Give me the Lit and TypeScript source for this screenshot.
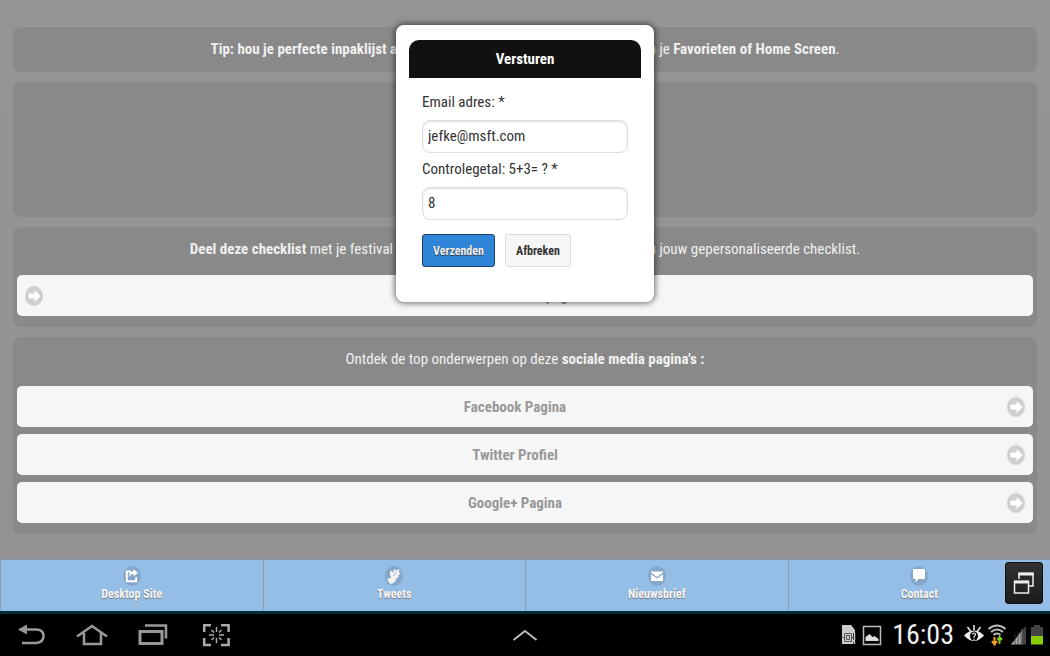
import { LitElement, html, css, svg } from "lit";
import { customElement, state } from "lit/decorators.js";

const arrowIcon = html`<svg class="arrow" viewBox="0 0 18 20" preserveAspectRatio="none" aria-hidden="true">
  <ellipse cx="9" cy="10" rx="9" ry="10" fill="#cfcfcf" />
  <path d="M3.5 7.500h6V4l6 6-6 6.200v-3.700h-6z" fill="#fff" />
</svg>`;

const tabGlyphs = {
  site: svg`<path d="M8 5.5H3.8v9.8h9.4v-4" fill="none" stroke="#fff" stroke-width="2"/><path d="M6 11c0-4 1.8-5.8 4.6-5.8V3l4.2 3.8-4.2 3.6V8C8.600 8 7 9 6 11z" fill="#fff"/>`,
  tweets: svg`<path d="M2 12.500c2 .5 3.200 0 4-1.500C4.600 9 4.400 6.500 5.500 4.500l2.700 2L9.300 3l2.200 1.600L14.500 3l-.8 3.200 2.100 1.300-2.600 1.700.6 2.400-2.200.2c-.6 3.600-3 6-6.300 6.200C4.200 17 3 15 2 12.500z" fill="#f2f2f2"/><path d="M8.500 10l3-4" stroke="#a9b6c4" stroke-width="1"/>`,
  mail: svg`<path d="M3 5.500h12v1L9 11 3 6.500z M3 8.200l6 4.300 6-4.300V15H3z" fill="#fff"/>`,
  chat: svg`<path d="M4 3h10q1 0 1 1v8q0 1-1 1H8.500L5.500 16.500V13H4q-1 0-1-1V4q0-1 1-1z" fill="#fff"/>`,
};

@customElement("app-root")
export class AppRoot extends LitElement {
  @state() private email = "jefke@msft.com";
  @state() private answer = "8";

  static styles = css`
    :host {
      display: flex;
      flex-direction: column;
      min-height: 100vh;
      position: relative;
      background: linear-gradient(#959595, #929292);
      font-family: "Roboto Condensed", Roboto, sans-serif;
      font-size: 15px;
      color: #f0f0f0;
    }
    *, *::before { box-sizing: border-box; }
    svg { display: block; }
    main {
      flex: 1;
      display: flex;
      flex-direction: column;
      gap: 10px;
      padding: 27px 13px 24px;
    }
    section { background: #898989; border-radius: 8px; padding: 0 4px; }
    .blank { height: 135px; }
    .share { padding-bottom: 11px; }
    .social { padding-bottom: 11px; }
    p { margin: 0; line-height: 45px; text-align: center; white-space: nowrap; }
    .links { display: flex; flex-direction: column; gap: 7px; padding-top: 3px; }
    .social .links { padding-top: 4px; }
    .link {
      display: flex;
      align-items: center;
      height: 41px;
      padding: 0 8px;
      gap: 2px;
      border-radius: 5px;
      background: #f6f6f6;
      color: #999;
      font-weight: bold;
      text-decoration: none;
    }
    .link span { flex: 1; text-align: center; }
    .arrow { width: 18px; height: 20px; }
    .tabs {
      display: grid;
      grid-template-columns: repeat(4, 1fr);
      height: 52px;
      background: #94bee6;
      border-top: 1px solid #8799aa;
    }
    .tab {
      display: flex;
      flex-direction: column;
      align-items: center;
      padding-top: 6px;
      gap: 2px;
      border-left: 1px solid #8c9fb2;
      color: #f4f4f4;
      text-decoration: none;
      font-size: 12px;
      line-height: 13px;
      font-weight: bold;
      text-shadow: 0 1px 1px #777;
    }
    .tab svg { width: 18px; height: 20px; }
    .system {
      display: grid;
      grid-template-columns: 1fr auto 1fr;
      align-items: center;
      height: 45px;
      border-top: 3px solid #052d35;
      background: #000;
    }
    .keys, .status { display: flex; align-items: center; }
    .keys { padding-left: 18px; gap: 30px; }
    .status { justify-content: flex-end; padding-right: 7px; gap: 3px; }
    .key, .float {
      border: 0;
      padding: 0;
      background: none;
      cursor: pointer;
    }
    .time { font-size: 28px; line-height: 30px; color: #eee; padding: 0 7px; }
    .float {
      position: absolute;
      right: 7px;
      bottom: 52px;
      width: 38px;
      height: 42px;
      display: grid;
      place-items: center;
      background: linear-gradient(#303030, #1c1c1c);
      border: 1px solid #111;
      border-radius: 3px;
    }
    .layer {
      position: absolute;
      inset: 0;
      display: flex;
      justify-content: center;
      align-items: flex-start;
      padding-top: 25px;
      pointer-events: none;
    }
    .dialog {
      pointer-events: auto;
      width: 258px;
      padding: 15px 13px 35px;
      border-radius: 8px;
      background: #fff;
      box-shadow: 0 0 6px 1px rgba(0, 0, 0, 0.6);
      color: #333;
    }
    h1 {
      margin: 0 0 12px;
      font-size: 15px;
      line-height: 38px;
      text-align: center;
      color: #fff;
      background: #111;
      border-radius: 10px 10px 0 0;
    }
    form { display: flex; flex-direction: column; padding: 0 13px; }
    label { line-height: 24px; margin-bottom: 6px; }
    input {
      width: 100%;
      height: 33px;
      margin: 0 0 4px;
      padding: 0 5px 2px;
      border: 1px solid #ddd;
      border-radius: 8px;
      background: #fff;
      box-shadow: inset 0 1px 2px #ddd;
      font: inherit;
      color: #333;
      outline: none;
    }
    .actions { display: flex; gap: 10px; padding-top: 10px; }
    .action {
      height: 33px;
      padding: 0 10px;
      border: 1px solid #ddd;
      border-radius: 3px;
      background: #f6f6f6;
      color: #333;
      font: bold 12px "Roboto Condensed", Roboto, sans-serif;
    }
    .primary {
      background: #2f86d8;
      border-color: #1f4263;
      color: #eee;
      text-shadow: 0 1px 1px #333;
    }
  `;

  private tab(label: string, glyph: unknown) {
    return html`<a class="tab" href="#">
      <svg viewBox="0 0 18 20" aria-hidden="true">
        <ellipse cx="9" cy="10" rx="9" ry="10" fill="#7f9ebd" opacity=".75" />${glyph}
      </svg>
      ${label}
    </a>`;
  }

  render() {
    return html`
      <main>
        <section><p><b>Tip: hou je perfecte inpaklijst altijd bij de hand</b> en bewaar deze checklist in je <b>Favorieten of Home Screen</b>.</p></section>
        <section class="blank"></section>
        <section class="share">
          <p><b>Deel deze checklist</b> met je festival vrienden en vriendinnen. Verstuur of deel nu jouw gepersonaliseerde checklist.</p>
          <div class="links"><a class="link" href="#">${arrowIcon}<span>Deel deze pagina</span></a></div>
        </section>
        <section class="social">
          <p>Ontdek de top onderwerpen op deze <b>sociale media pagina's :</b></p>
          <div class="links">
            ${["Facebook Pagina", "Twitter Profiel", "Google+ Pagina"].map(
              (name) => html`<a class="link" href="#"><span>${name}</span>${arrowIcon}</a>`
            )}
          </div>
        </section>
      </main>
      <nav class="tabs">
        ${this.tab("Desktop Site", tabGlyphs.site)}
        ${this.tab("Tweets", tabGlyphs.tweets)}
        ${this.tab("Nieuwsbrief", tabGlyphs.mail)}
        ${this.tab("Contact", tabGlyphs.chat)}
      </nav>
      <footer class="system">
        <div class="keys">
          <button class="key" aria-label="Terug"><svg width="28" height="24" fill="none" stroke="#999" stroke-width="2.500"><path d="M6 6.500h12q7.500 0 7.500 6.500T18 20H4"/><path d="M0 6.500L9 1.500v10z" fill="#999" stroke="none"/></svg></button>
          <button class="key" aria-label="Start"><svg width="32" height="24" fill="none" stroke="#999" stroke-width="2.500"><path d="M1 13.500L16 3l15 10.500M8 10v11h17V10"/></svg></button>
          <button class="key" aria-label="Recente apps"><svg width="32" height="24" fill="none" stroke="#999"><path d="M2 8.500h22v12H2z" stroke-width="3"/><path d="M7 2.500h21v13" stroke-width="2.500"/></svg></button>
          <button class="key" aria-label="Schermafbeelding"><svg width="32" height="24" fill="none" stroke="#aaa" stroke-width="2.500"><path d="M11 2.200H4.200V9M21 2.200h7.600V9M4.200 15v7H11M28.600 15v7H21"/><path d="M16.500 4v5M16.500 15v5M9 12h5M19 12h5M11.500 7l2.500 2.500M21.500 7L19 9.500M11.500 17l2.500-2.500M21.500 17L19 14.500" stroke-width="1.500"/></svg></button>
        </div>
        <button class="key" aria-label="Omhoog"><svg width="26" height="14" fill="none" stroke="#bbb" stroke-width="2"><path d="M1.500 12L13 3l11.500 9"/></svg></button>
        <div class="status">
          <svg width="20" height="22"><path d="M3 1h9l4 5v14H3z" fill="#ccc"/><path d="M5.500 9.500h7v8h-7z M7.500 11.500h3v4h-3z M5.500 13.500h-2M12.500 13.500h2" fill="none" stroke="#555"/><path d="M15.500 9v7M15.500 18v2" stroke="#000" stroke-width="3"/><path d="M15.500 9v7M15.500 18v2" stroke="#ccc" stroke-width="1.500"/></svg>
          <svg width="20" height="22"><path d="M1.500 2.500h17v18h-17z" fill="none" stroke="#bbb" stroke-width="1.500"/><path d="M3.500 17v-4l4-3 3 3 2-1 4 3v2z" fill="#ddd"/></svg>
          <span class="time">16:03</span>
          <svg width="20" height="22" fill="none" stroke="#eee" stroke-width="1.500"><path d="M1 11.500Q10 3 19 11.500 10 21 1 11.500z" fill="#eee"/><path d="M10 1v5M3.500 3l3 4M16.500 3l-3 4"/><ellipse cx="10" cy="12" rx="4" ry="4.500" fill="#000" stroke="none"/><path d="M8.500 10.500q0-1.500 1.500-1.500t1.500 1.500q0 1-1.500 2v1M10 14.500v1.200" stroke-width="1.200"/></svg>
          <svg width="20" height="24" fill="none"><path d="M1.500 6q8.500-7 17 0M4 9q6-5 12 0M6.500 12q3.500-3 7 0" stroke="#bbb" stroke-width="2"/><path d="M7.500 14v7M5 18l2.500 3.500L10 18" stroke="#f9a11b" stroke-width="2"/><path d="M12.500 21v-7M10.500 17l2-3 2.500 3" stroke="#80cc10" stroke-width="2"/></svg>
          <svg width="18" height="22"><path d="M1 20.500L13 5v15.500z" fill="#aaa"/><path d="M12 6.500L16 2v18.500h-4z" fill="#444"/><path d="M5 10v11M8 7v14M11 4v17" stroke="#333" stroke-width=".8"/></svg>
          <svg width="12" height="22"><path d="M3 1h6v2h3v9H0V3h3z" fill="#444"/><path d="M0 12h12v8.500H0z" fill="#8c0"/></svg>
        </div>
      </footer>
      <button class="float" aria-label="Vensters"><svg width="22" height="24" fill="none" stroke="#eee"><path d="M6 8V2.500h14V15h-4" stroke-width="1.500"/><path d="M5.500 3h15" stroke-width="3"/><path d="M1.500 10.500h14V22h-14z" stroke-width="1.500"/><path d="M1 11h15" stroke-width="3"/></svg></button>
      <div class="layer">
        <div class="dialog" role="dialog" aria-labelledby="title">
          <h1 id="title">Versturen</h1>
          <form @submit=${(e: Event) => e.preventDefault()}>
            <label for="email">Email adres: *</label>
            <input id="email" type="text" .value=${this.email} @input=${(e: any) => (this.email = e.target.value)} />
            <label for="answer">Controlegetal: 5+3= ? *</label>
            <input id="answer" type="text" .value=${this.answer} @input=${(e: any) => (this.answer = e.target.value)} />
            <div class="actions">
              <button class="action primary" type="submit">Verzenden</button>
              <button class="action" type="button">Afbreken</button>
            </div>
          </form>
        </div>
      </div>
    `;
  }
}
